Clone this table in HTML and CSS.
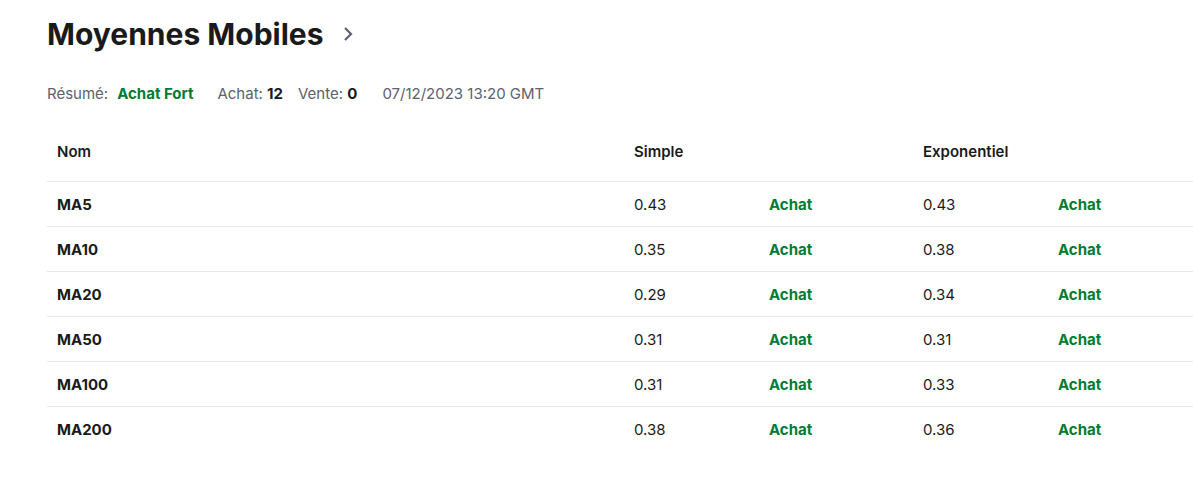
FILE: index.html
```html
<!DOCTYPE html>
<html lang="fr">
<head>
<meta charset="utf-8">
<link rel="stylesheet" href="styles.css">
</head>
<body>
<div class="page">
  <h2 class="title">Moyennes Mobiles
    <svg class="chev" width="12" height="16" viewBox="0 0 12 16"><path d="M3 2 L9 8 L3 14" fill="none" stroke="#5f6370" stroke-width="2.2"/></svg>
  </h2>
  <div class="summary">
    <span class="lbl">Résumé:</span><span class="buy strong">Achat Fort</span>
    <span class="lbl">Achat: <b>12</b></span>
    <span class="lbl">Vente: <b>0</b></span>
    <span class="lbl date">07/12/2023 13:20 GMT</span>
  </div>
  <div class="tablewrap">
  <table class="ma">
    <thead>
      <tr><th class="c1">Nom</th><th class="c2">Simple</th><th class="c3"></th><th class="c4">Exponentiel</th><th class="c5"></th></tr>
    </thead>
    <tbody>
      <tr><td class="name">MA5</td><td>0.43</td><td class="buy">Achat</td><td>0.43</td><td class="buy">Achat</td></tr>
      <tr><td class="name">MA10</td><td>0.35</td><td class="buy">Achat</td><td>0.38</td><td class="buy">Achat</td></tr>
      <tr><td class="name">MA20</td><td>0.29</td><td class="buy">Achat</td><td>0.34</td><td class="buy">Achat</td></tr>
      <tr><td class="name">MA50</td><td>0.31</td><td class="buy">Achat</td><td>0.31</td><td class="buy">Achat</td></tr>
      <tr><td class="name">MA100</td><td>0.31</td><td class="buy">Achat</td><td>0.33</td><td class="buy">Achat</td></tr>
      <tr><td class="name">MA200</td><td>0.38</td><td class="buy">Achat</td><td>0.36</td><td class="buy">Achat</td></tr>
    </tbody>
  </table>
  </div>
</div>
</body>
</html>
```
FILE: styles.css
```css
html, body { margin: 0; padding: 0; background: #fff; }
body { font-family: Inter, "Noto Sans", sans-serif; color: #1a1a1a; overflow: hidden; }
.page { padding: 13px 0 0 47px; }
.title {
  margin: 0;
  font-size: 30px;
  font-weight: 700;
  line-height: 42px;
  color: #1a1a1a;
  display: flex;
  align-items: center;
}
.chev { margin-left: 18px; }
.summary {
  margin-top: 29px;
  font-size: 15px;
  line-height: 20px;
  display: flex;
  align-items: baseline;
}
.lbl { color: #5b616e; }
.lbl b { color: #1a1a1a; font-weight: 700; }
.summary .strong { margin-left: 9px; margin-right: 24px; }
.summary .lbl + .lbl { margin-left: 15px; }
.summary .date { margin-left: 25px !important; }
.buy { color: #007c32; font-weight: 700; }
.tablewrap { margin-top: 19px; width: 1155px; }
.ma { border-collapse: collapse; width: 1155px; table-layout: fixed; font-size: 15px; }
.ma th, .ma td { text-align: left; padding: 0 10px; height: 44px; }
.ma th { font-weight: 600; height: 56px; padding-bottom: 2px; border-bottom: 1px solid #e6e9ee; vertical-align: middle; }
.ma td { border-bottom: 1px solid #e6e9ee; }
.ma tbody tr:last-child td { border-bottom: none; }
.c1 { width: 557px; }
.c2 { width: 115px; }
.c3 { width: 134px; }
.c4 { width: 115px; }
.c5 { width: 134px; }
.name { font-weight: 700; }
```
